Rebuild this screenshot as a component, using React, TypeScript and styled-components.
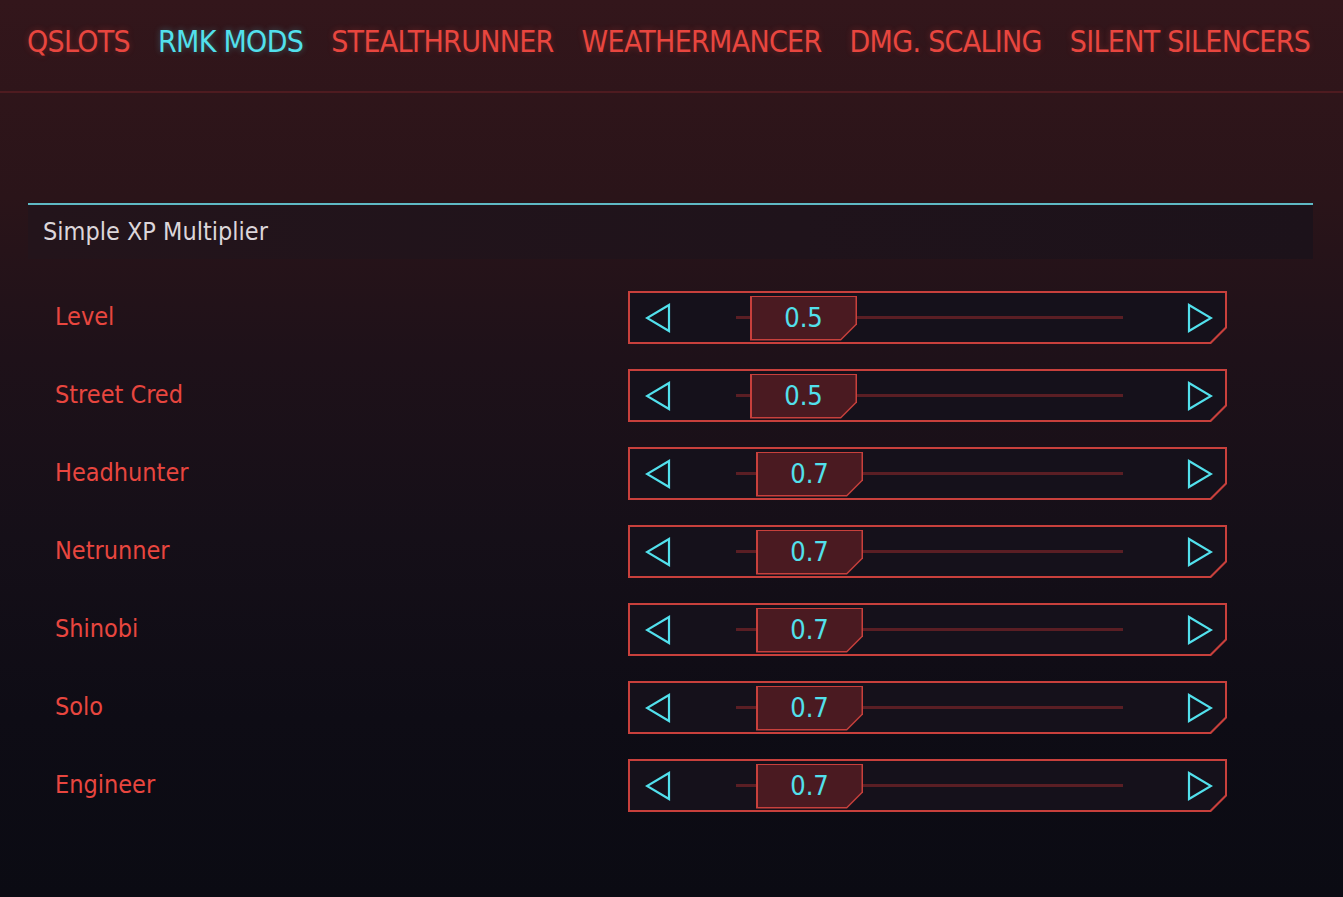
import styled, { createGlobalStyle } from 'styled-components';

const GlobalStyle = createGlobalStyle`
  html, body {
    margin: 0;
    padding: 0;
    background: #0b0b13;
  }
  * {
    box-sizing: border-box;
  }
`;

const FONT = `"DejaVu Sans Condensed", "Liberation Sans Narrow", "DejaVu Sans", sans-serif`;
const RED = '#e8463f';
const CYAN = '#52e0ec';

const Page = styled.div`
  width: 1343px;
  height: 897px;
  overflow: hidden;
  font-family: ${FONT};
  background: linear-gradient(
    180deg,
    #33161b 0%,
    #2a1419 22%,
    #1e1119 40%,
    #150f18 60%,
    #0e0c15 80%,
    #0b0b13 100%
  );
`;

const Nav = styled.nav`
  display: flex;
  align-items: center;
  gap: 28px;
  height: 93px;
  padding: 0 0 8px 27px;
  border-bottom: 2px solid #4e1b20;
`;

const Tab = styled.div<{ $active?: boolean }>`
  font-size: 30px;
  line-height: 1;
  letter-spacing: -0.7px;
  color: ${(p) => (p.$active ? CYAN : RED)};
  text-shadow: 0 0 6px ${(p) => (p.$active ? 'rgba(82,224,236,0.35)' : 'rgba(232,70,63,0.3)')};
  white-space: nowrap;
`;

const Content = styled.main`
  padding: 110px 30px 0 28px;
`;

const SectionHeader = styled.div`
  height: 56px;
  border-top: 2px solid #5fb9c4;
  background: linear-gradient(90deg, #23141b 0%, #1f131b 60%, #1c121a 100%);
  display: flex;
  align-items: center;
  padding: 0 0 2px 15px;
  font-size: 25px;
  color: #dcd6da;
`;

const Rows = styled.div`
  display: flex;
  flex-direction: column;
  gap: 25px;
  margin-top: 32px;
  padding-left: 27px;
`;

const Row = styled.div`
  display: grid;
  grid-template-columns: 573px 599px;
  align-items: center;
  height: 53px;
`;

const Label = styled.div`
  font-size: 25px;
  color: ${RED};
  padding-bottom: 2px;
`;

const Frame = styled.div`
  height: 53px;
  padding: 2px;
  background: #c8403c;
  clip-path: polygon(0 0, 100% 0, 100% calc(100% - 16px), calc(100% - 16px) 100%, 0 100%);
`;

const FrameInner = styled.div`
  height: 100%;
  display: flex;
  align-items: center;
  background: #15111b;
  clip-path: polygon(0 0, 100% 0, 100% calc(100% - 15px), calc(100% - 15px) 100%, 0 100%);
  padding: 0 0 0 15px;
`;

const Arrow = styled.svg`
  flex: none;
  width: 26px;
  height: 30px;
`;

const Track = styled.div`
  position: relative;
  margin-left: 65px;
  width: 387px;
  height: 44px;
  display: flex;
  align-items: center;
  margin-right: 64px;
`;

const TrackLine = styled.div`
  width: 100%;
  height: 3px;
  background: #5a1e24;
`;

const Thumb = styled.div`
  position: absolute;
  top: 0;
  width: 107px;
  height: 45px;
  padding: 1.5px;
  background: #c8403c;
  clip-path: polygon(0 0, 100% 0, 100% calc(100% - 16px), calc(100% - 16px) 100%, 0 100%);
`;

const ThumbInner = styled.div`
  height: 100%;
  display: flex;
  align-items: center;
  justify-content: center;
  background: #4a1a21;
  clip-path: polygon(0 0, 100% 0, 100% calc(100% - 15px), calc(100% - 15px) 100%, 0 100%);
  font-size: 27px;
  color: ${CYAN};
  padding-bottom: 2px;
`;

const LeftArrow = () => (
  <Arrow viewBox="0 0 26 30">
    <polygon points="24,2 2,15 24,28" fill="none" stroke={CYAN} strokeWidth="2.2" strokeLinejoin="miter" />
  </Arrow>
);

const RightArrow = () => (
  <Arrow viewBox="0 0 26 30">
    <polygon points="2,2 24,15 2,28" fill="none" stroke={CYAN} strokeWidth="2.2" strokeLinejoin="miter" />
  </Arrow>
);

const tabs = ['QSLOTS', 'RMK MODS', 'STEALTHRUNNER', 'WEATHERMANCER', 'DMG. SCALING', 'SILENT SILENCERS'];

const settings = [
  { label: 'Level', value: 0.5 },
  { label: 'Street Cred', value: 0.5 },
  { label: 'Headhunter', value: 0.7 },
  { label: 'Netrunner', value: 0.7 },
  { label: 'Shinobi', value: 0.7 },
  { label: 'Solo', value: 0.7 },
  { label: 'Engineer', value: 0.7 },
];

const Slider = ({ value }: { value: number }) => (
  <Frame>
    <FrameInner>
      <LeftArrow />
      <Track>
        <TrackLine />
        <Thumb style={{ left: `${Math.round(value * 30 - 1)}px` }}>
          <ThumbInner>{value.toFixed(1)}</ThumbInner>
        </Thumb>
      </Track>
      <RightArrow />
    </FrameInner>
  </Frame>
);

export default function App() {
  return (
    <Page>
      <GlobalStyle />
      <Nav>
        {tabs.map((t) => (
          <Tab key={t} $active={t === 'RMK MODS'}>
            {t}
          </Tab>
        ))}
      </Nav>
      <Content>
        <SectionHeader>Simple XP Multiplier</SectionHeader>
        <Rows>
          {settings.map((s) => (
            <Row key={s.label}>
              <Label>{s.label}</Label>
              <Slider value={s.value} />
            </Row>
          ))}
        </Rows>
      </Content>
    </Page>
  );
}
